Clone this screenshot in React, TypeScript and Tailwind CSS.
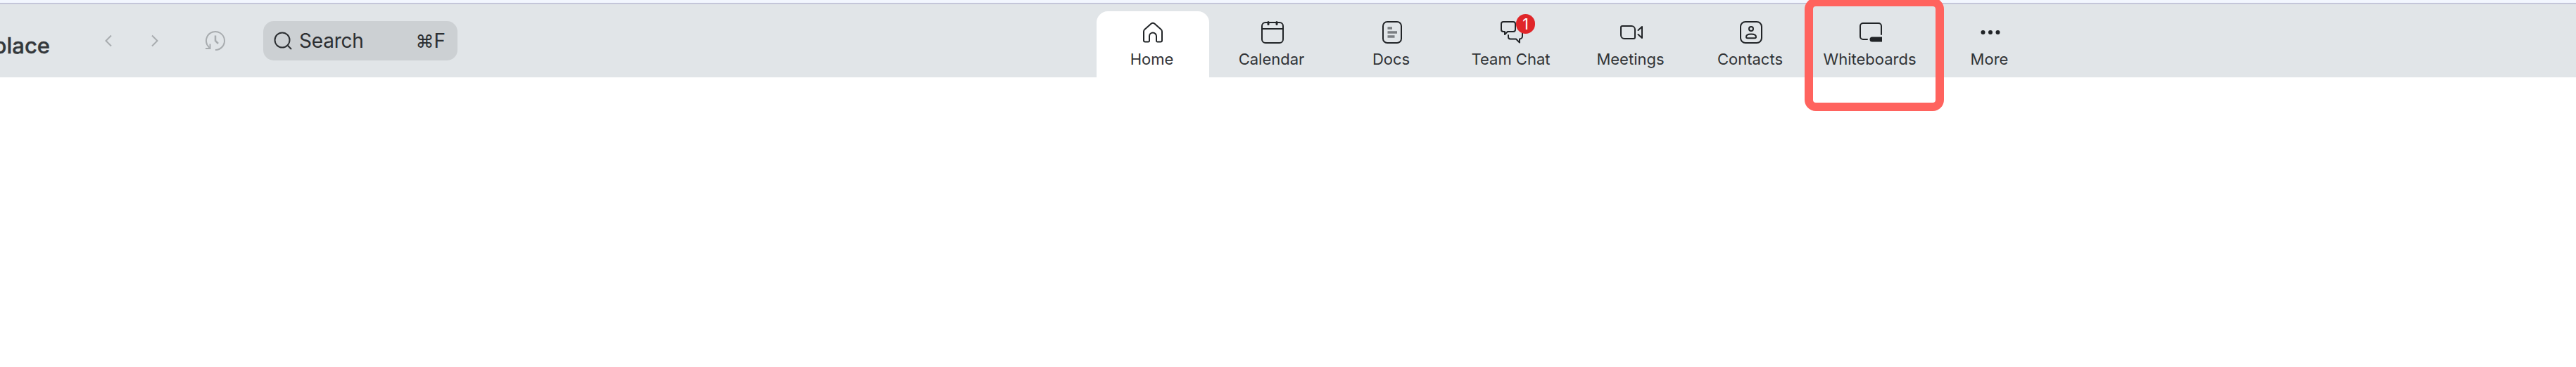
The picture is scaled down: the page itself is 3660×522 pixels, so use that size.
import type { ReactNode } from "react";
import clsx from "clsx";

function Icon({ children }: { children: ReactNode }) {
  return (
    <svg
      viewBox="0 0 32 32"
      className="block size-8 shrink-0 overflow-visible"
      fill="none"
      stroke="currentColor"
      strokeWidth={2}
      strokeLinecap="round"
      strokeLinejoin="round"
    >
      {children}
    </svg>
  );
}

const icons = {
  home: (
    <Icon>
      <path d="M5 29.5h4.5a1.5 1.5 0 0 0 1.5-1.5v-6.500a5 5 0 0 1 10 0V28a1.500 1.500 0 0 0 1.500 1.500H27a2 2 0 0 0 2-2V15a4 4 0 0 0-1.500-3.200l-9-8a4 4 0 0 0-5 0l-9 8A4 4 0 0 0 3 15v12.500a2 2 0 0 0 2 2Z" />
    </Icon>
  ),
  calendar: (
    <Icon>
      <rect x="1" y="2" width="30" height="29" rx="5" />
      <path d="M1 11h30" />
      <path d="M10 1.500v3M22 1.500v3" strokeWidth={3} />
    </Icon>
  ),
  docs: (
    <Icon>
      <rect x="3" y="1" width="26" height="30" rx="6" />
      <path
        d="M9.500 10h6.500M9.500 16h13.500M9.500 22h10"
        stroke="#7a7e81"
        strokeWidth={3.5}
        strokeLinecap="butt"
      />
    </Icon>
  ),
  chat: (
    <Icon>
      <path d="M4 1h14a3 3 0 0 1 3 3v8a3 3 0 0 1-3 3h-8l-4 4v-4H4a3 3 0 0 1-3-3V4a3 3 0 0 1 3-3Z" />
      <path d="M11 20v2.500a3 3 0 0 0 3 3h8l5 5v-5a4 4 0 0 0 4-4V14" />
    </Icon>
  ),
  meetings: (
    <Icon>
      <path d="M3 7h13a5 5 0 0 1 5 5v11a2 2 0 0 1-2 2H6a5 5 0 0 1-5-5V9a2 2 0 0 1 2-2Z" />
      <path d="M25.500 13 31 8v16l-5.500-5" />
    </Icon>
  ),
  contacts: (
    <Icon>
      <rect x="1" y="1" width="30" height="30" rx="7" />
      <circle cx="16" cy="11" r="3" />
      <path d="M9 22.500c0-2.500 3-4 7-4s7 1.500 7 4c0 1-.8 1.800-1.800 1.800H10.800c-1 0-1.800-.8-1.800-1.800Z" />
    </Icon>
  ),
  whiteboards: (
    <Icon>
      <path d="M11 26H5a4 4 0 0 1-4-4V7a4 4 0 0 1 4-4h22a4 4 0 0 1 4 4v12" />
      <path
        d="M18 22.500h14v7H18a3.500 3.500 0 0 1 0-7Z"
        fill="currentColor"
        stroke="none"
      />
    </Icon>
  ),
  more: (
    <Icon>
      <g fill="currentColor" stroke="none">
        <circle cx="5.500" cy="16" r="3" />
        <circle cx="16" cy="16" r="3" />
        <circle cx="26.500" cy="16" r="3" />
      </g>
    </Icon>
  ),
};

type Tab = {
  label: string;
  icon: keyof typeof icons;
  badge?: number;
  highlighted?: boolean;
};

const tabs: Tab[] = [
  { label: "Home", icon: "home" },
  { label: "Calendar", icon: "calendar" },
  { label: "Docs", icon: "docs" },
  { label: "Team Chat", icon: "chat", badge: 1 },
  { label: "Meetings", icon: "meetings" },
  { label: "Contacts", icon: "contacts" },
  { label: "Whiteboards", icon: "whiteboards", highlighted: true },
  { label: "More", icon: "more" },
];

function NavTab({ tab, active }: { tab: Tab; active: boolean }) {
  return (
    <button
      type="button"
      className={clsx(
        "relative flex h-[94px] w-40 shrink-0 flex-col items-center rounded-t-[16px] pt-3.5 text-[#212427]",
        active && "bg-white",
      )}
    >
      <span className="relative">
        {icons[tab.icon]}
        {tab.badge ? (
          <span className="absolute -top-2.5 left-[22px] flex h-7 w-[27px] items-center justify-center rounded-full bg-[#e02629] text-[21px] leading-none text-white">
            {tab.badge}
          </span>
        ) : null}
      </span>
      <span className="mt-2 pr-[3px] text-[22px] leading-7 whitespace-nowrap text-[#303336]">
        {tab.label}
      </span>
      {tab.highlighted ? (
        <span className="absolute -top-[19px] -left-3.5 h-[161px] w-[198px] rounded-[16px] border-12 border-[#ff635e]" />
      ) : null}
    </button>
  );
}

function HistoryControls() {
  return (
    <div className="mt-11 ml-[79px] flex h-7 items-center text-[#a8acaf]">
      <button type="button" aria-label="Back">
        <svg viewBox="0 0 8 16" className="h-4 w-2 overflow-visible" fill="none" stroke="currentColor" strokeWidth={2}>
          <path d="M8 .5.500 8 8 15.500" />
        </svg>
      </button>
      <button type="button" aria-label="Forward" className="ml-[58px]">
        <svg viewBox="0 0 8 16" className="h-4 w-2 overflow-visible" fill="none" stroke="currentColor" strokeWidth={2}>
          <path d="M0 .5 7.500 8 0 15.500" />
        </svg>
      </button>
      <button type="button" aria-label="History" className="ml-[68px]">
        <svg viewBox="0 0 28 28" className="size-7 overflow-visible" fill="none" stroke="currentColor" strokeWidth={2}>
          <path d="M14 27A13 13 0 1 0 2.200 19.500L5.500 24" />
          <path d="M0 25h6.500v-6.500" />
          <path d="M14 6.500v7.500l4 4" strokeWidth={2.5} />
        </svg>
      </button>
    </div>
  );
}

function SearchBox() {
  return (
    <div className="mt-[30px] ml-[54px] flex h-14 w-[276px] shrink-0 items-center rounded-[15px] bg-[#ccd0d3] pr-[17px] pl-[15px] text-[28px] text-[#2c2f32]">
      <svg viewBox="0 0 26 26" className="size-[26px]" fill="none" stroke="currentColor" strokeWidth={2}>
        <circle cx="12" cy="12" r="10.500" />
        <path d="m19 19 6 6" />
      </svg>
      <span className="ml-2.5 tracking-[-0.2px]">Search</span>
      <span className="ml-auto flex items-center">
        <span className="text-[26px]">⌘</span>
        <span>F</span>
      </span>
    </div>
  );
}

export default function App() {
  return (
    <div className="h-[522px] w-[3660px] overflow-hidden bg-white font-['Inter','DejaVu_Sans',sans-serif]">
      <header className="h-[110px] bg-[linear-gradient(#f2f6fe_4px,#c4c6d9_4px,#c4c6d9_6px,#e1e5e8_6px)]">
        <div className="flex items-start">
          {/* the title runs off the left edge of the window */}
          <div className="mt-[45px] flex w-[71px] shrink-0 justify-end text-[31px] leading-10 font-medium text-[#34383b] [-webkit-text-stroke:0.4px]">
            place
          </div>
          <HistoryControls />
          <SearchBox />
          <nav className="mt-4 ml-[908px] flex gap-2.5">
            {tabs.map((tab) => (
              <NavTab key={tab.label} tab={tab} active={tab.label === "Home"} />
            ))}
          </nav>
        </div>
      </header>
    </div>
  );
}
